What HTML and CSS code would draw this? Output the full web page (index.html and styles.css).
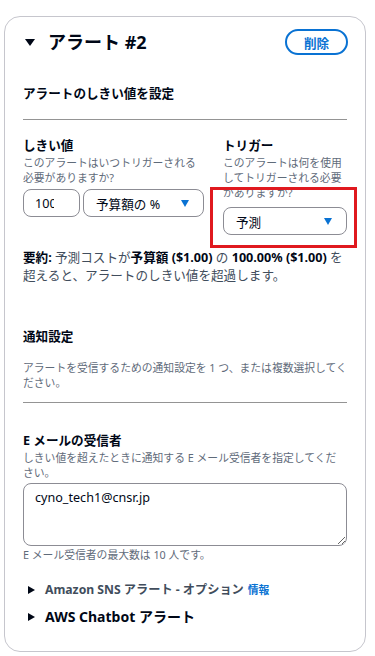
FILE: index.html
```html
<!DOCTYPE html>
<html>
<head>
	<meta charset="utf-8">
	<meta name="viewport" content="width=device-width, initial-scale=1">
	<title>アラート #2</title>
	<link rel="stylesheet" href="styles.css">
</head>
<body>
	<div class="card">
		<div class="card-head">
			<h2 class="title"><span class="tri-down"></span>アラート #2</h2>
			<button class="btn-delete">削除</button>
		</div>

		<h3 class="sub">アラートのしきい値を設定</h3>
		<hr class="divider">

		<div class="cols">
			<div class="col-left">
				<div class="label">しきい値</div>
				<div class="desc">このアラートはいつトリガーされる必要がありますか?</div>
				<div class="input-row">
					<div class="num-input"><span>100</span></div>
					<div class="select select-unit">予算額の %<span class="caret"></span></div>
				</div>
			</div>
			<div class="col-right">
				<div class="label">トリガー</div>
				<div class="desc">このアラートは何を使用してトリガーされる必要がありますか?</div>
				<div class="select select-trigger">予測<span class="caret"></span></div>
				<div class="highlight"></div>
			</div>
		</div>

		<p class="summary"><b>要約:</b> 予測コストが<b>予算額 ($1.00)</b> の <b>100.00% ($1.00)</b> を超えると、アラートのしきい値を超過します。</p>

		<h3 class="sub notify">通知設定</h3>
		<div class="desc notify-desc">アラートを受信するための通知設定を 1 つ、または複数選択してください。</div>
		<hr class="divider divider2">

		<div class="label mail-label">E メールの受信者</div>
		<div class="desc">しきい値を超えたときに通知する E メール受信者を指定してください。</div>
		<textarea class="mail-box">cyno_tech1@cnsr.jp</textarea>
		<div class="desc">E メール受信者の最大数は 10 人です。</div>

		<div class="expand expand-sns"><span class="tri-right"></span>Amazon SNS アラート - オプション <a class="info">情報</a></div>
		<div class="expand expand-chatbot"><span class="tri-right"></span>AWS Chatbot アラート</div>
	</div>
</body>
</html>
```

FILE: styles.css
```css
body{
	margin:0px;
	background:#ffffff;
	font-family:"Noto Sans","Noto Sans CJK JP",sans-serif;
	color:#000716;
}
.card{
	box-sizing:border-box;
	width:362px;
	margin:16px 0px 8px 4px;
	padding:12px 18px 23px 18px;
	border:1px solid #c6c6cd;
	border-radius:16px;
}
.card-head{
	display:flex;
	justify-content:space-between;
	align-items:center;
	height:26px;
}
.title{
	margin:0px;
	font-size:18px;
	line-height:22px;
	font-weight:bold;
	display:flex;
	align-items:center;
}
.tri-down{
	width:0;
	height:0;
	border-left:5px solid transparent;
	border-right:5px solid transparent;
	border-top:7px solid #000716;
	margin:0px 13px 0px 2px;
}
.btn-delete{
	box-sizing:border-box;
	width:63px;
	height:26px;
	margin-right:-1px;
	border:2px solid #0972d3;
	border-radius:20px;
	background:#ffffff;
	color:#0972d3;
	font-family:inherit;
	font-size:12.6px;
	font-weight:bold;
	padding:0px;
}
.sub{
	margin:29px 0px 0px 0px;
	font-size:12.6px;
	line-height:20px;
	font-weight:bold;
}
.divider{
	margin:15px 0px 0px 0px;
	border:0px;
	border-top:1px solid #949494;
	height:0px;
}
.cols{
	display:flex;
	gap:19px;
	margin-top:17px;
}
.col-left{
	width:181px;
}
.col-right{
	position:relative;
	width:124px;
}
.label{
	font-size:12.6px;
	line-height:18px;
	font-weight:bold;
}
.desc{
	font-size:10.8px;
	line-height:15px;
	color:#5f6b7a;
}
.input-row{
	display:flex;
	gap:3px;
	margin-top:4px;
}
.num-input,.select{
	box-sizing:border-box;
	height:28px;
	border:1px solid #8c8c94;
	border-radius:8px;
	font-size:12.6px;
	display:flex;
	align-items:center;
	white-space:nowrap;
}
.num-input{
	width:57px;
	padding-left:11px;
}
.num-input span{
	display:block;
	width:19px;
	overflow:hidden;
}
.select{
	justify-content:space-between;
	padding:0px 14px 0px 12px;
}
.select-unit{
	width:121px;
}
.select-trigger{
	margin-top:7px;
}
.caret{
	width:0;
	height:0;
	border-left:4px solid transparent;
	border-right:4px solid transparent;
	border-top:7px solid #0972d3;
}
.highlight{
	position:absolute;
	left:-13px;
	right:-10px;
	top:50px;
	height:61px;
	box-sizing:border-box;
	border:3px solid #e0191f;
}
.summary{
	margin:14px 0px 0px 0px;
	font-size:12.6px;
	line-height:18px;
	color:#414d5c;
}
.summary b{
	color:#000716;
}
.notify{
	margin-top:42px;
}
.notify-desc{
	margin-top:13px;
}
.divider2{
	margin-top:12px;
}
.mail-label{
	margin-top:29px;
}
.mail-box{
	display:block;
	box-sizing:border-box;
	width:100%;
	height:63px;
	margin:3px 0px 1px 0px;
	padding:4px 11px;
	border:1px solid #8c8c94;
	border-radius:8px;
	font-family:inherit;
	font-size:12.6px;
	line-height:20px;
	color:#000716;
}
.expand{
	display:flex;
	align-items:center;
	font-weight:bold;
	white-space:nowrap;
}
.tri-right{
	width:0;
	height:0;
	border-top:4.5px solid transparent;
	border-bottom:4.5px solid transparent;
	border-left:7px solid #000716;
	margin:0px 10px 0px 5px;
}
.expand-sns{
	margin-top:18px;
	font-size:12.2px;
	line-height:20px;
	color:#414d5c;
}
.info{
	margin-left:4px;
	font-size:10.8px;
	color:#0972d3;
}
.expand-chatbot{
	margin-top:6px;
	font-size:14px;
	line-height:22px;
}
```
